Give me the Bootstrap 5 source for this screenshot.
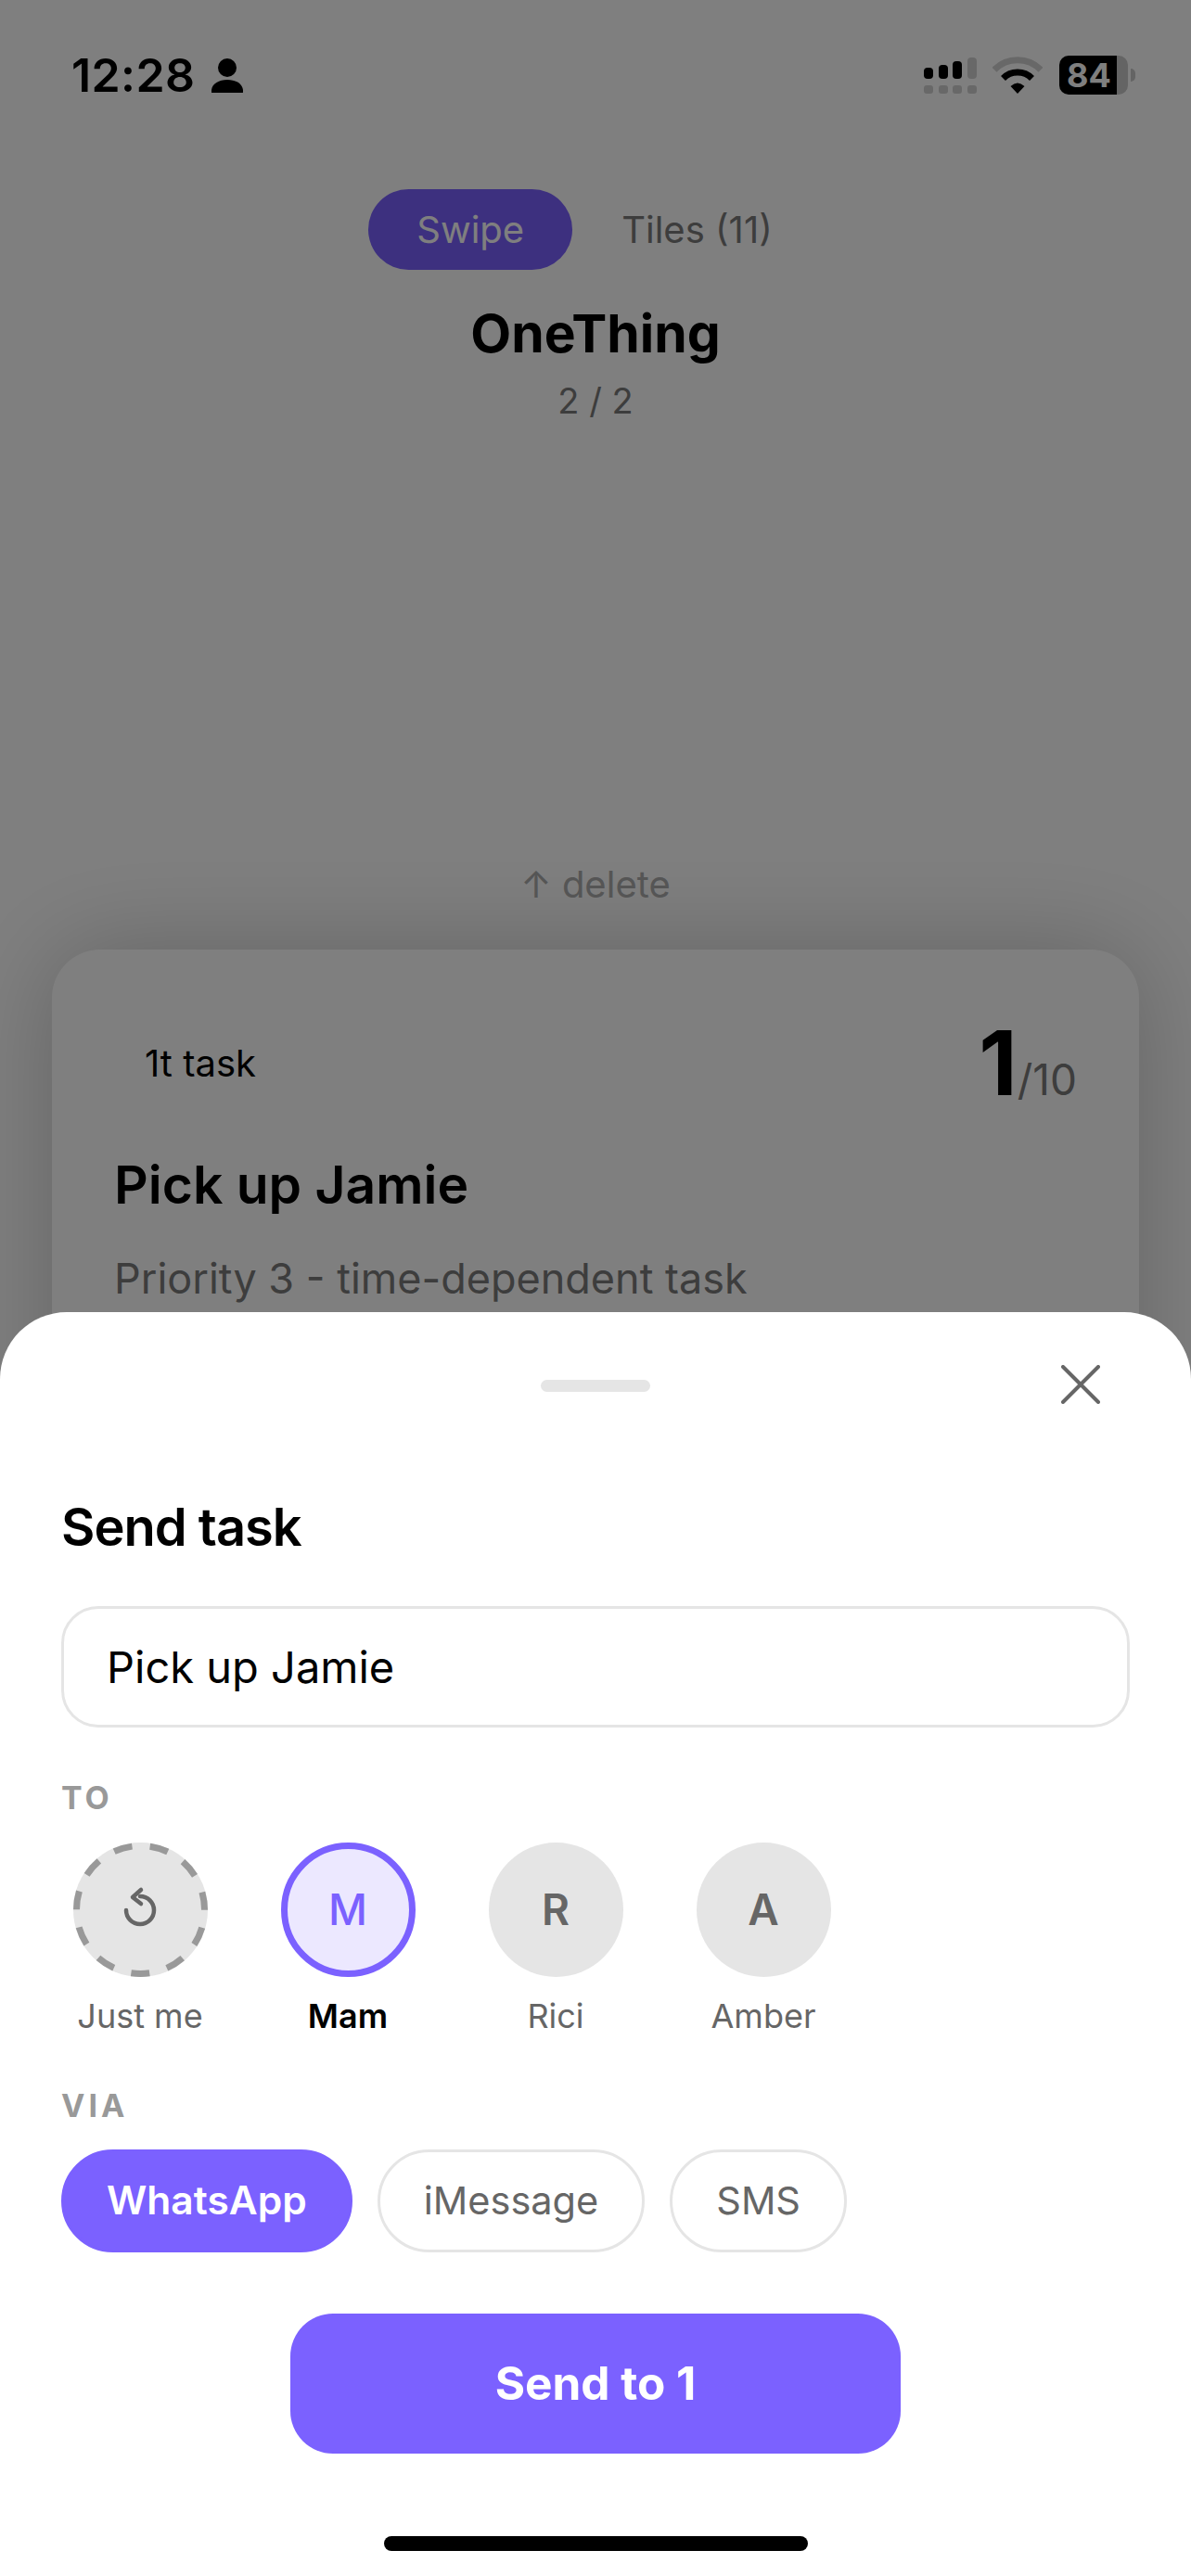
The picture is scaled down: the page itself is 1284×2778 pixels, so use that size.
<!DOCTYPE html>
<html lang="en">
<head>
  <meta charset="UTF-8" />
  <meta name="viewport" content="width=device-width, initial-scale=1.0">
  <title>OneThing</title>
  <link href="https://cdn.jsdelivr.net/npm/bootstrap@5.3.3/dist/css/bootstrap.min.css" rel="stylesheet">
  <style>
    body { width: 1284px; height: 2778px; overflow: hidden; background-color: #fff; font-family: Inter, "Liberation Sans", sans-serif; color: #000; }
    .status-row { height: 102px; padding: 60px 60px 0 77px; }
    .status-time { font-size: 50px; line-height: 42px; font-weight: 600; letter-spacing: .4px; }
    .status-person { margin-left: 2px; }
    .wifi-icon { margin-right: 18px; }
    .battery-box { width: 74px; height: 42px; border-radius: 10px; background: linear-gradient(to right, #000 62px, #c8c8c8 62px); color: #fff; font-size: 36px; font-weight: 700; line-height: 42px; padding-left: 8px; }
    .battery-nub { width: 5px; height: 14px; background: #c8c8c8; border-radius: 0 6px 6px 0; margin-left: 3px; }
    .view-tabs { margin-top: 102px; padding-right: 1px; }
    .view-tab { height: 87px; padding: 0 53px; border: 0; background: none; border-radius: 44px; font-size: 40px; line-height: 87px; color: #7a7a7a; }
    .view-tab.is-on { background: #7b61ff; color: #fff; padding: 0 52px; }
    .app-title { font-size: 57px; line-height: 70px; font-weight: 700; margin: 34px 0 0; }
    .app-count { font-size: 38px; line-height: 46px; color: #7a7a7a; margin-top: 14px; }
    .swipe-hint { font-size: 40px; line-height: 46px; color: #aaa; margin-top: 476px; }
    .task-box { margin: 47px 56px 0; height: 1200px; background: #fff; border-radius: 52px; padding: 79px 67px 0; box-shadow: 0 0 110px rgba(0,0,0,.22); }
    .task-head { height: 90px; }
    .task-kind { font-size: 40px; line-height: 46px; padding-left: 33px; margin-top: -3px; }
    .task-score { font-size: 96px; line-height: 90px; font-weight: 700; margin-top: 14px; }
    .task-score span { font-size: 46px; font-weight: 400; color: #7a7a7a; }
    .task-name { font-size: 57px; line-height: 68px; font-weight: 600; margin: 51px 0 0; }
    .task-note { font-size: 45px; line-height: 54px; color: #7a7a7a; margin-top: 40px; }
    .scrim { position: absolute; inset: 0; background: rgba(0,0,0,.5); }
    .sheet { position: absolute; left: 0; right: 0; top: 1415px; bottom: 0; background: #fff; border-radius: 72px 72px 0 0; padding: 73px 66px 0; }
    .sheet-handle { width: 118px; height: 13px; border-radius: 7px; background: #e5e5e5; margin: 0 auto; }
    .sheet-close { position: absolute; top: 57px; left: 1144px; width: 42px; height: 42px; padding: 0; border: 0; background: none; display: block; }
    .sheet-title { font-size: 56px; line-height: 68px; font-weight: 600; letter-spacing: -1px; margin: 112px 0 0; }
    .task-input.form-control { height: 131px; margin-top: 51px; border: 3px solid #e5e5e5; border-radius: 40px; padding: 0 46px; font-size: 47px; color: #000; box-shadow: none; }
    .field-label { font-size: 34px; line-height: 40px; font-weight: 700; letter-spacing: 4px; color: #999; }
    .label-to { margin-top: 56px; }
    .label-via { margin-top: 55px; }
    .people-row { margin-top: 28px; }
    .via-row { margin-top: 27px; gap: 27px; }
    .person { width: 168px; margin-right: 56px; }
    .person:first-child { margin-left: 1px; }
    .person-dot { width: 145px; height: 145px; border-radius: 50%; background: #e5e5e5; color: #666; font-size: 46px; font-weight: 600; }
    .person-dot.is-on { background: #ece8ff; border: 7px solid #7b61ff; color: #7b61ff; font-weight: 500; }
    .person-name { font-size: 36px; line-height: 44px; margin-top: 20px; color: #666; }
    .person-name.is-on { color: #000; font-weight: 600; }
    .via-btn.btn { height: 111px; padding: 0 47px; border: 3px solid #e5e5e5; border-radius: 56px; background: #fff; color: #666; font-size: 41.5px; line-height: 1; }
    .via-btn.is-on.btn { background: #7b61ff; border-color: #7b61ff; color: #fff; font-weight: 600; font-size: 42.5px; padding: 0 46px; }
    .send-btn.btn { display: block; width: 658px; height: 151px; margin: 66px auto 0; border: 0; border-radius: 46px; background: #7b61ff; color: #fff; font-size: 49.5px; font-weight: 700; }
    .home-bar { width: 457px; height: 16px; border-radius: 8px; background: #000; margin: 89px auto 0; }
  </style>
</head>
<body class="position-relative">

  <div class="d-flex justify-content-between status-row">
    <div class="d-flex align-items-center gap-3">
      <span class="status-time">12:28</span>
      <svg class="status-person" width="34" height="38" viewBox="0 0 34 38"><circle cx="17" cy="11" r="10" fill="#000"/><path d="M1 38c-2 0-1-2-1-3 1-7 8-11 17-11s16 4 17 11c0 1 1 3-1 3z" fill="#000"/></svg>
    </div>
    <div class="d-flex align-items-start">
      <svg width="58" height="42" viewBox="0 0 58 42" class="me-3">
        <g fill="#000"><rect x="0" y="13" width="10" height="12" rx="4"/><rect x="16" y="10" width="10" height="15" rx="4"/><rect x="31" y="6" width="10" height="19" rx="4"/></g>
        <rect x="47" y="2" width="10" height="23" rx="4" fill="#d0d0d0"/>
        <g fill="#d0d0d0"><rect x="0" y="32" width="10" height="9" rx="3"/><rect x="16" y="32" width="10" height="9" rx="3"/><rect x="31" y="32" width="10" height="9" rx="3"/><rect x="47" y="32" width="10" height="9" rx="3"/></g>
      </svg>
      <svg width="54" height="42" viewBox="0 0 54 42" class="wifi-icon" fill="none">
        <path d="M2 15.3A35 35 0 0 1 52 15.3" stroke="#d0d0d0" stroke-width="7"/>
        <path d="M11.5 24.5A22 22 0 0 1 42.5 24.5" stroke="#000" stroke-width="7"/>
        <path d="M19.5 33Q27 26 34.5 33L27 41Z" fill="#000"/>
      </svg>
      <div class="d-flex align-items-center">
        <div class="battery-box">84</div>
        <div class="battery-nub"></div>
      </div>
    </div>
  </div>

  <div class="d-flex justify-content-center view-tabs">
    <button class="view-tab is-on" type="button">Swipe</button>
    <button class="view-tab" type="button">Tiles (11)</button>
  </div>

  <div class="text-center">
    <h1 class="app-title">OneThing</h1>
    <div class="app-count">2 / 2</div>
    <div class="swipe-hint">↑ delete</div>
  </div>

  <div class="task-box">
    <div class="d-flex justify-content-between align-items-center task-head">
      <span class="task-kind">1t task</span>
      <span class="task-score">1<span>/10</span></span>
    </div>
    <h2 class="task-name">Pick up Jamie</h2>
    <div class="task-note">Priority 3 - time-dependent task</div>
  </div>

  <div class="scrim"></div>

  <div class="sheet">
    <div class="sheet-handle"></div>
    <button class="sheet-close" type="button" aria-label="Close">
      <svg width="42" height="42" viewBox="0 0 42 42"><path d="M2 2L40 40M40 2L2 40" stroke="#666" stroke-width="4" stroke-linecap="round"/></svg>
    </button>

    <h3 class="sheet-title">Send task</h3>
    <input class="form-control task-input" type="text" value="Pick up Jamie">

    <div class="field-label label-to">TO</div>
    <div class="d-flex people-row">
      <div class="person text-center">
        <svg class="d-block mx-auto" width="145" height="145" viewBox="0 0 145 145" fill="none">
          <circle cx="72.5" cy="72.5" r="72.5" fill="#e5e5e5"/>
          <circle cx="72.5" cy="72.5" r="69" stroke="#999" stroke-width="7" stroke-dasharray="20 19.41" stroke-dashoffset="-19.6"/>
          <g stroke="#666" stroke-width="4.5" stroke-linecap="round" stroke-linejoin="round">
            <path d="M57 73A15 15 0 1 0 72 58"/>
            <path d="M73 51L64 59L73 66"/>
          </g>
        </svg>
        <div class="person-name">Just me</div>
      </div>
      <div class="person text-center">
        <div class="person-dot is-on d-flex align-items-center justify-content-center mx-auto">M</div>
        <div class="person-name is-on">Mam</div>
      </div>
      <div class="person text-center">
        <div class="person-dot d-flex align-items-center justify-content-center mx-auto">R</div>
        <div class="person-name">Rici</div>
      </div>
      <div class="person text-center">
        <div class="person-dot d-flex align-items-center justify-content-center mx-auto">A</div>
        <div class="person-name">Amber</div>
      </div>
    </div>

    <div class="field-label label-via">VIA</div>
    <div class="d-flex via-row">
      <button class="btn via-btn is-on" type="button">WhatsApp</button>
      <button class="btn via-btn" type="button">iMessage</button>
      <button class="btn via-btn" type="button">SMS</button>
    </div>

    <button class="btn send-btn" type="button">Send to 1</button>
    <div class="home-bar"></div>
  </div>

  <script src="https://cdn.jsdelivr.net/npm/bootstrap@5.3.3/dist/js/bootstrap.bundle.min.js"></script>
</body>
</html>
